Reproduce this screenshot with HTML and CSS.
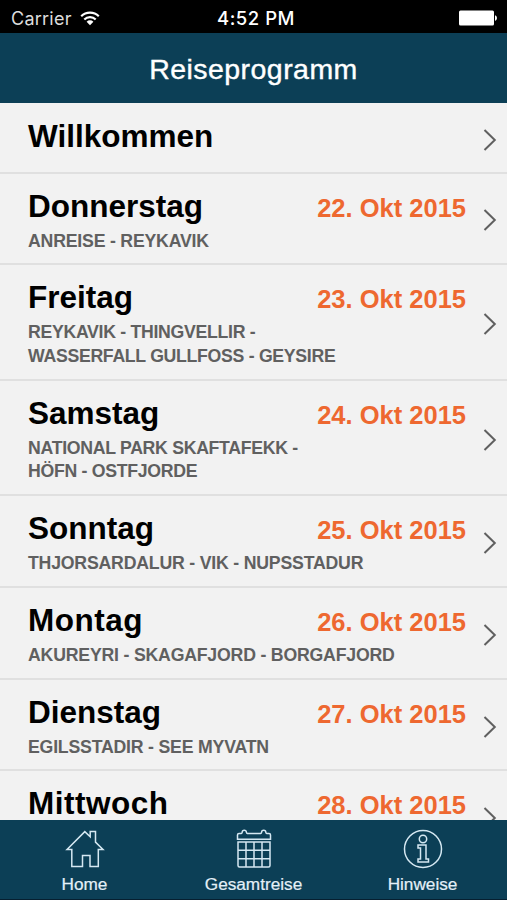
FILE: index.html
```html
<!DOCTYPE html>
<html lang="de">

<head>
    <meta charset="UTF-8">
    <meta name="viewport" content="width=device-width, initial-scale=1.0">
    <title>Reiseprogramm</title>
    <link rel="stylesheet" href="styles.css">
</head>

<body>
    <div class="app">
        <!-- Statusleiste -->
        <div class="status">
            <div class="carrier">
                <span>Carrier</span>
                <svg class="wifi" width="20" height="15" viewBox="0 0 20 15">
                    <path d="M1.2 5.2a12.6 12.6 0 0 1 17.6 0M4.3 8.5a8.1 8.1 0 0 1 11.4 0" fill="none" stroke="#fff" stroke-width="2.2"/>
                    <path d="M6.6 10.7a4.9 4.9 0 0 1 6.8 0L10 14.3z" fill="#fff"/>
                </svg>
            </div>
            <span class="clock">4:52 PM</span>
            <svg class="battery" width="39" height="16" viewBox="0 0 39 16">
                <rect x="0" y="0.5" width="35" height="15" rx="1.5" fill="#fff"/>
                <path d="M36 5.2c2.6.6 2.6 5 0 5.6z" fill="#fff"/>
            </svg>
        </div>

        <header class="header">
            <h1>Reiseprogramm</h1>
        </header>

        <!-- Liste der Tage -->
        <main class="list">
            <div class="row welcome">
                <div class="info">
                    <h2>Willkommen</h2>
                </div>
                <svg class="arrow" width="14" height="24" viewBox="0 0 14 24"><path d="M1.5 2 11.8 12 1.5 22"/></svg>
            </div>
            <div class="row">
                <div class="info">
                    <h2>Donnerstag</h2>
                    <p class="loose">ANREISE - REYKAVIK</p>
                </div>
                <span class="date">22. Okt 2015</span>
                <svg class="arrow" width="14" height="24" viewBox="0 0 14 24"><path d="M1.5 2 11.8 12 1.5 22"/></svg>
            </div>
            <div class="row tall">
                <div class="info">
                    <h2>Freitag</h2>
                    <p>REYKAVIK - THINGVELLIR -<br>WASSERFALL GULLFOSS - GEYSIRE</p>
                </div>
                <span class="date">23. Okt 2015</span>
                <svg class="arrow" width="14" height="24" viewBox="0 0 14 24"><path d="M1.5 2 11.8 12 1.5 22"/></svg>
            </div>
            <div class="row tall">
                <div class="info">
                    <h2>Samstag</h2>
                    <p>NATIONAL PARK SKAFTAFEKK -<br>HÖFN - OSTFJORDE</p>
                </div>
                <span class="date">24. Okt 2015</span>
                <svg class="arrow" width="14" height="24" viewBox="0 0 14 24"><path d="M1.5 2 11.8 12 1.5 22"/></svg>
            </div>
            <div class="row">
                <div class="info">
                    <h2>Sonntag</h2>
                    <p class="loose">THJORSARDALUR - VIK - NUPSSTADUR</p>
                </div>
                <span class="date">25. Okt 2015</span>
                <svg class="arrow" width="14" height="24" viewBox="0 0 14 24"><path d="M1.5 2 11.8 12 1.5 22"/></svg>
            </div>
            <div class="row">
                <div class="info">
                    <h2 class="wide">Montag</h2>
                    <p class="loose">AKUREYRI - SKAGAFJORD - BORGAFJORD</p>
                </div>
                <span class="date">26. Okt 2015</span>
                <svg class="arrow" width="14" height="24" viewBox="0 0 14 24"><path d="M1.5 2 11.8 12 1.5 22"/></svg>
            </div>
            <div class="row">
                <div class="info">
                    <h2>Dienstag</h2>
                    <p class="loose">EGILSSTADIR - SEE MYVATN</p>
                </div>
                <span class="date">27. Okt 2015</span>
                <svg class="arrow" width="14" height="24" viewBox="0 0 14 24"><path d="M1.5 2 11.8 12 1.5 22"/></svg>
            </div>
            <div class="row">
                <div class="info">
                    <h2 class="wide">Mittwoch</h2>
                </div>
                <span class="date">28. Okt 2015</span>
                <svg class="arrow" width="14" height="24" viewBox="0 0 14 24"><path d="M1.5 2 11.8 12 1.5 22"/></svg>
            </div>
        </main>

        <nav class="tabs">
            <a class="tab">
                <svg width="40" height="40" viewBox="0 0 40 40">
                    <path d="M2 20.5 19.8 2.6l5.4 5.2V2.6h5.3v10.5l7.5 7.4h-4.7v17H25V26.5h-7.5v11H6.8v-17z"/>
                </svg>
                <span>Home</span>
            </a>
            <a class="tab">
                <svg width="40" height="40" viewBox="0 0 40 40">
                    <path d="M5 4.5h2.2q1-.2 1-1.2a2.1 2.1 0 0 1 4.2 0q0 1 1 1.2h13.2q1-.2 1-1.2a2.1 2.1 0 0 1 4.2 0q0 1 1 1.2H35q1.500 0 1.500 1.500v4.300h-33V6q0-1.500 1.500-1.500z"/>
                    <path d="M4 13h32v23.500q0 1.500-1.500 1.500h-29Q4 38 4 36.500zM4 21.300h32M4 29.700h32M12 13v25M20 13v25M28 13v25"/>
                </svg>
                <span>Gesamtreise</span>
            </a>
            <a class="tab">
                <svg width="40" height="40" viewBox="0 0 40 40">
                    <circle cx="20" cy="20" r="18.5"/>
                    <circle cx="20" cy="10" r="3.7"/>
                    <path d="M15 16h8v14h2.500v3H15v-3h2.500V19H15z"/>
                </svg>
                <span>Hinweise</span>
            </a>
        </nav>
    </div>
</body>

</html>
```

FILE: styles.css
```css
* {
    box-sizing: border-box;
}

body {
    margin: 0;
    font-family: "Liberation Sans", Arial, sans-serif;
    background-color: #f2f2f2;
}

h1, h2, p {
    margin: 0;
}

.app {
    display: flex;
    flex-direction: column;
    height: 900px;
    overflow: hidden;
}

.status {
    flex: none;
    display: grid;
    grid-template-columns: 1fr auto 1fr;
    align-items: center;
    height: 33px;
    padding: 3px 9px 0 11px;
    background-color: #000;
    color: #fff;
    font-family: Inter, sans-serif;
    font-size: 18px;
}

.carrier {
    display: flex;
    align-items: center;
    gap: 8px;
    color: #ddd;
    letter-spacing: 0.25px;
}

.clock {
    padding-left: 3px;
    font-weight: 500;
    font-size: 18.5px;
    letter-spacing: 0.5px;
}

.battery {
    justify-self: end;
}

.header {
    flex: none;
    display: flex;
    align-items: center;
    justify-content: center;
    height: 70px;
    padding-top: 3px;
    background-color: #0c3f56;
    color: #fff;
}

.header h1 {
    font-size: 28.5px;
    font-weight: normal;
    letter-spacing: 0.45px;
    -webkit-text-stroke: 0.4px #fff;
}

.list {
    flex: 1;
    min-height: 0;
    overflow: hidden;
}

.row {
    display: flex;
    align-items: flex-start;
    padding: 14px 10px 10px 28px;
    border-bottom: 2px solid #e0e0e0;
    height: 91.7px;
}

.row.tall {
    height: 115.5px;
}

.row.welcome {
    height: 70.6px;
    padding-top: 15px;
}

.info {
    flex: 1;
    min-width: 0;
    white-space: nowrap;
}

.info h2 {
    font-size: 31.5px;
    line-height: 36px;
    color: #000;
}

.info h2.wide {
    letter-spacing: 0.5px;
}

.info p {
    margin-top: 6px;
    font-size: 17.7px;
    font-weight: bold;
    line-height: 23.7px;
    letter-spacing: -0.3px;
    color: #606060;
}

.info p.loose {
    letter-spacing: -0.2px;
}

.date {
    flex: none;
    padding-top: 5px;
    margin-right: 17px;
    font-size: 25.5px;
    font-weight: bold;
    line-height: 30px;
    color: #ee6830;
}

.arrow {
    flex: none;
    align-self: center;
}

.arrow path {
    fill: none;
    stroke: #606060;
    stroke-width: 2;
}

.tabs {
    flex: none;
    display: flex;
    height: 80px;
    background-color: #0c3f56;
    border-bottom: 1px solid #061f30;
}

.tab {
    flex: 1;
    display: flex;
    flex-direction: column;
    align-items: center;
    padding-top: 9px;
    gap: 5px;
    color: #e4f0f8;
    font-size: 17.2px;
}

.tab span {
    -webkit-text-stroke: 0.2px #e4f0f8;
}

.tab path,
.tab circle {
    fill: none;
    stroke: #d5e8f2;
    stroke-width: 1.5;
}
```
